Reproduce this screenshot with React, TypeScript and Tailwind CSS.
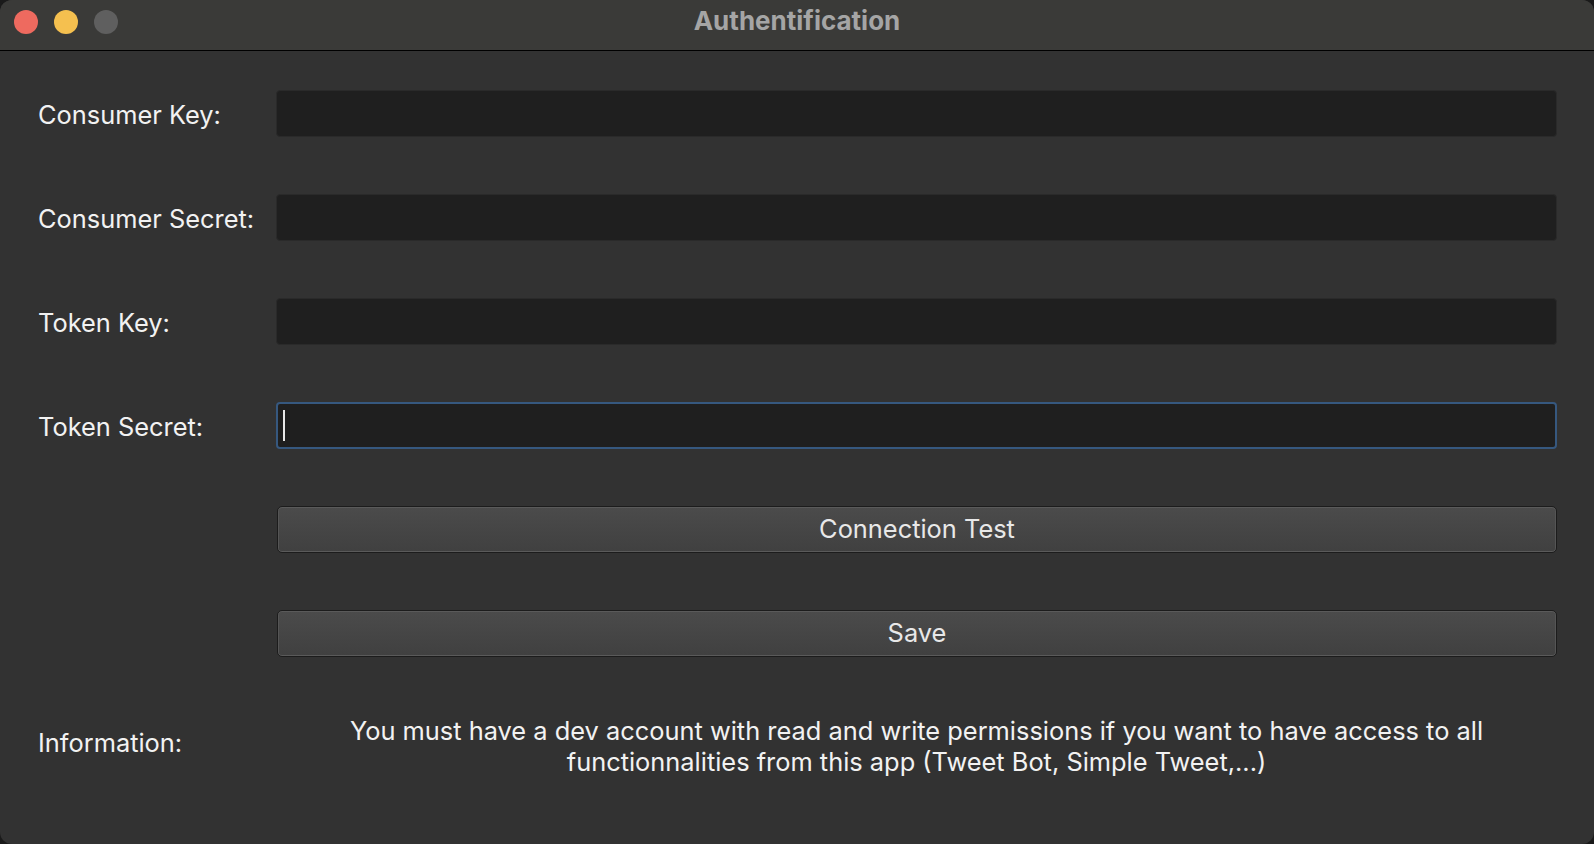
import React from 'react';

const font = { fontFamily: 'Inter, "Liberation Sans", Arial, sans-serif' };

const Field = ({ label, focused }: { label: string; focused?: boolean }) => (
  <div className="flex items-center h-[47px]">
    <div className="w-[276px] pl-[38px] pt-[3px] text-[25.4px] text-[#f2f2f2]">{label}</div>
    <div
      className={
        focused
          ? 'flex-1 h-full rounded-[4px] bg-[#1f1f1f] border-2 border-[#36587f] flex items-center pl-[5px]'
          : 'flex-1 h-full rounded-[4px] bg-[#1f1f1f] border border-[#2a2a2a]'
      }
    >
      {focused && <div className="w-[2px] h-[31px] bg-[#e8e8e8]" />}
    </div>
  </div>
);

const ActionButton = ({ children }: { children: React.ReactNode }) => (
  <div className="flex items-center h-[47px]">
    <div className="w-[277px]" />
    <button className="flex-1 h-full rounded-[5px] border border-[#1c1c1c] bg-gradient-to-b from-[#4b4b4b] to-[#404040] shadow-[inset_0_1px_0_#5a5a5a,inset_0_-1px_0_#5a5a5a,inset_1px_0_0_#555,inset_-1px_0_0_#555] text-[25.4px] text-[#e8e8e8]">
      {children}
    </button>
  </div>
);

export default function App() {
  return (
    <div className="w-[1594px] h-[844px] bg-[#1a1a1a]" style={font}>
      <div className="w-full h-full rounded-[12px] overflow-hidden flex flex-col bg-[#323232]">
        {/* title bar */}
        <div className="h-[51px] bg-[#3a3a38] border-b border-black flex items-start relative shrink-0">
          <div className="flex items-center gap-[16px] pl-[14px] pt-[10px]">
            <div className="w-[24px] h-[24px] rounded-full bg-[#ee6a5f]" />
            <div className="w-[24px] h-[24px] rounded-full bg-[#f5c04f]" />
            <div className="w-[24px] h-[24px] rounded-full bg-[#5f5f5f]" />
          </div>
          <div className="absolute inset-x-0 top-[4px] flex justify-center pointer-events-none">
            <span className="text-[26px] leading-[34px] font-bold text-[#a5a5a5]">Authentification</span>
          </div>
        </div>

        {/* form */}
        <div className="flex flex-col gap-[57px] pt-[39px] pr-[37px]">
          <Field label="Consumer Key:" />
          <Field label="Consumer Secret:" />
          <Field label="Token Key:" />
          <Field label="Token Secret:" focused />
          <ActionButton>Connection Test</ActionButton>
          <ActionButton>Save</ActionButton>
          <div className="flex items-center pt-[1px]">
            <div className="w-[276px] pl-[38px] pb-[6px] text-[25.4px] text-[#f2f2f2]">Information:</div>
            <p className="flex-1 text-center text-[25.4px] leading-[31px] text-[#f2f2f2]">
              You must have a dev account with read and write permissions if you want to have access to all
              <br />
              functionnalities from this app (Tweet Bot, Simple Tweet,...)
            </p>
          </div>
        </div>
      </div>
    </div>
  );
}
